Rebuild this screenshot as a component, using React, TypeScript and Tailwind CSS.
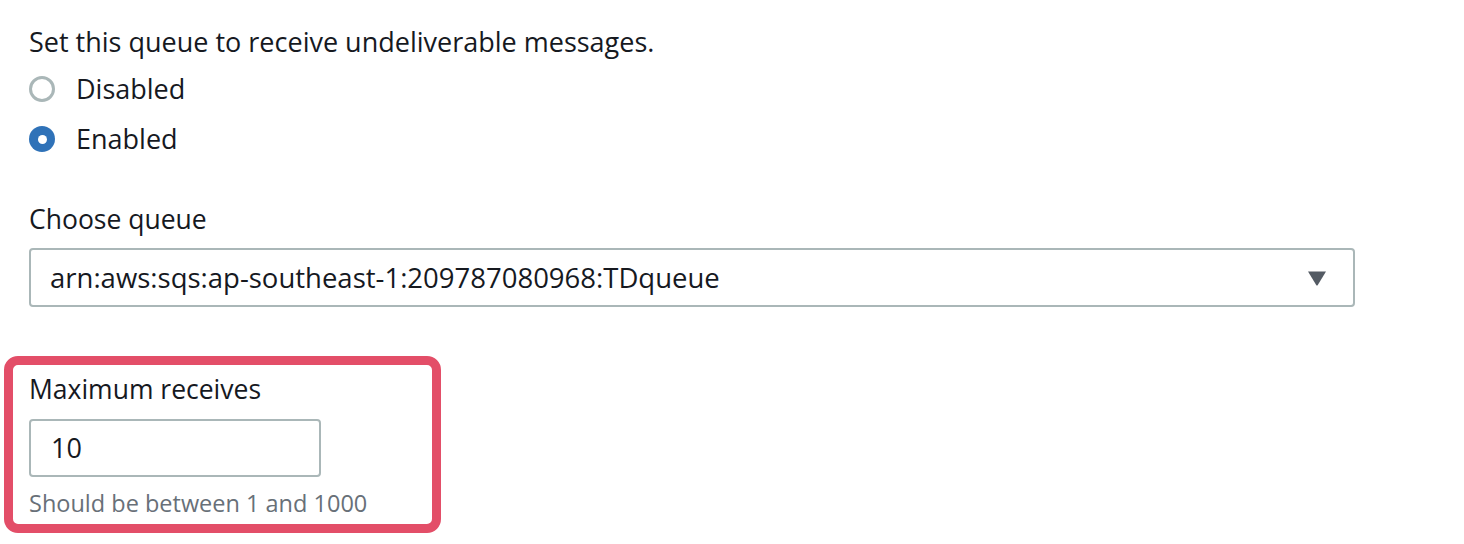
export default function App() {
  return (
    <main
      className="min-h-screen bg-white pl-[29px] pt-[26px] text-[#16191f]"
      style={{ fontFamily: '"Open Sans", "Liberation Sans", Arial, sans-serif' }}
    >
      <p className="text-[27px] leading-[32px]">Set this queue to receive undeliverable messages.</p>

      {/* radio group */}
      <div className="mt-[6px] flex flex-col">
        <label className="flex h-[50px] items-center">
          <span className="h-[26px] w-[26px] rounded-full border-[3px] border-[#aab7b8] bg-white" />
          <span className="ml-[21px] text-[27px]">Disabled</span>
        </label>
        <label className="flex h-[50px] items-center">
          <span className="flex h-[26px] w-[26px] items-center justify-center rounded-full bg-[#2f72b8]">
            <span className="h-[9px] w-[9px] rounded-full bg-white" />
          </span>
          <span className="ml-[21px] text-[27px]">Enabled</span>
        </label>
      </div>

      {/* queue select */}
      <p className="mt-[39px] text-[26.5px] leading-[32px]">Choose queue</p>
      <div className="mt-[13px] flex h-[59px] w-[1326px] items-center justify-between rounded-[4px] border-2 border-[#aab7b8] pl-[19px] pr-[26px]">
        <span className="text-[27.5px]">arn:aws:sqs:ap-southeast-1:209787080968:TDqueue</span>
        <svg width="20" height="16" viewBox="0 0 20 16">
          <path d="M1 1.5 H19 L10.8 15 Q10 16 9.2 15 Z" fill="#545b64" />
        </svg>
      </div>

      {/* highlighted field */}
      <div className="-ml-[25px] mt-[49px] w-[437px] rounded-[14px] border-[9px] border-[#e34e68] bg-white pb-[7px] pl-[16px] pt-[8px]">
        <p className="text-[26.5px] leading-[32px]">Maximum receives</p>
        <div className="mt-[14px] flex h-[58px] w-[292px] items-center rounded-[4px] border-2 border-[#aab7b8] pl-[20px]">
          <span className="text-[27px]">10</span>
        </div>
        <p className="mt-[12px] text-[23.5px] leading-[28px] text-[#687078]">Should be between 1 and 1000</p>
      </div>
    </main>
  );
}
